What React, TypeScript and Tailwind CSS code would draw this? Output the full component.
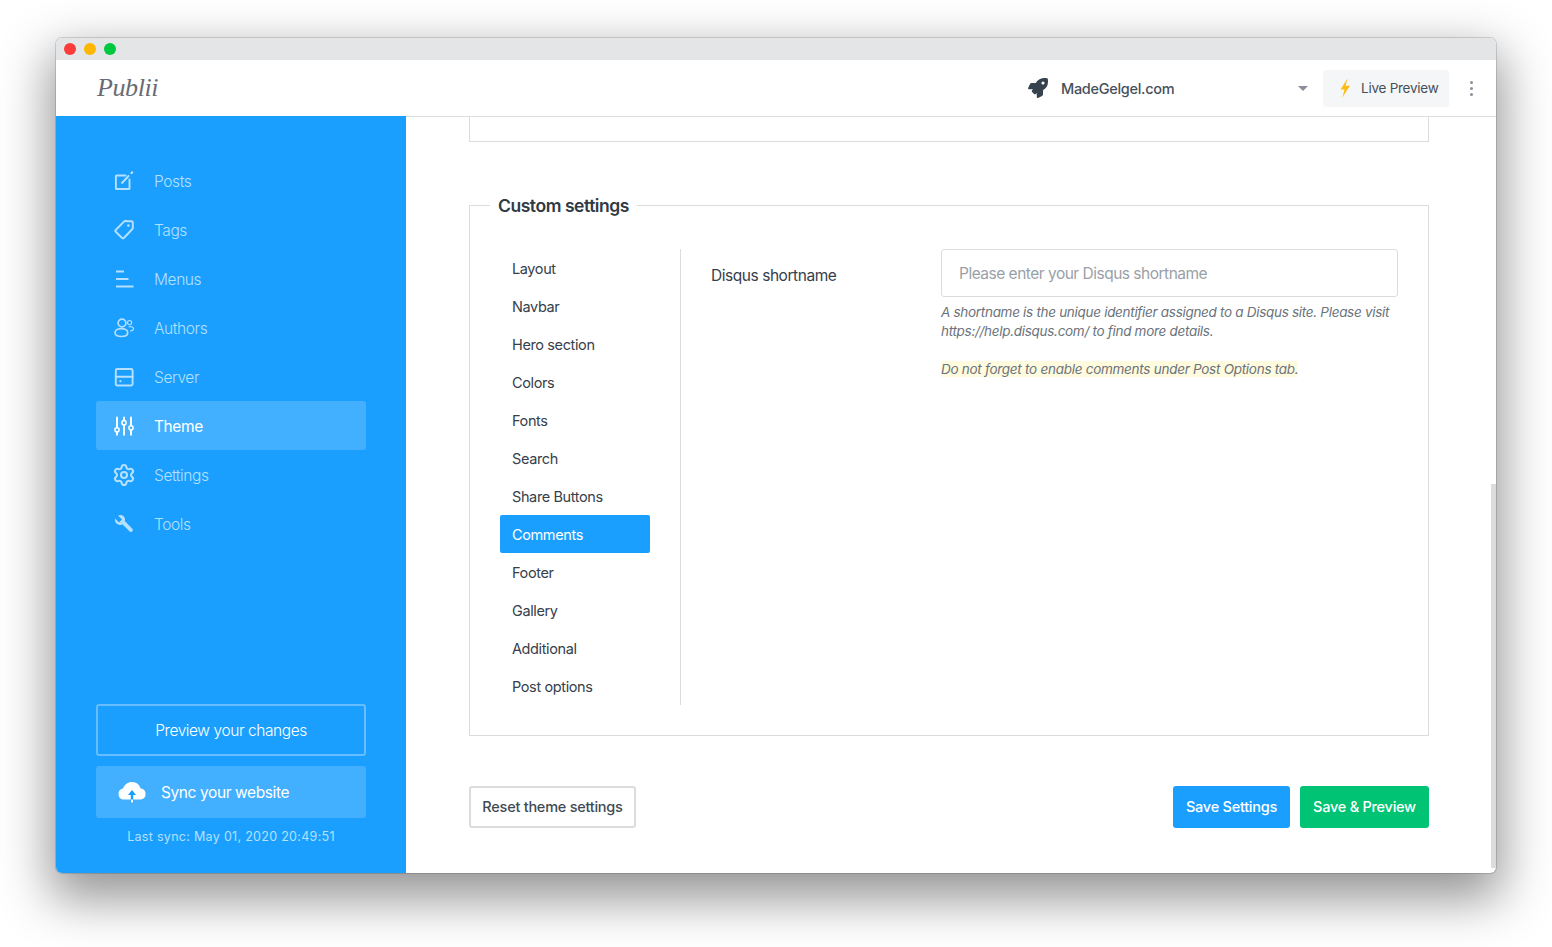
import React from "react";
import { FaRocket } from "react-icons/fa";
import { Settings } from "lucide-react";

const S = { fill: "none", stroke: "currentColor", strokeWidth: 1.9, strokeLinecap: "round", strokeLinejoin: "round" } as const;

const IconPosts = () => (
  <svg width="20" height="20" viewBox="0 0 20 20" {...S}>
    <path d="M11.500 4.500H2.500a.6.6 0 0 0-.6.6v12.300c0 .3.3.6.6.6h12.400c.3 0 .6-.3.6-.6V8.500" />
    <path d="M8 12l6.500-7" />
    <path d="M17.500 2l.6-.6" strokeWidth={2.2} />
  </svg>
);
const IconTag = () => (
  <svg width="20" height="20" viewBox="0 0 20 20" {...S}>
    <path d="M12 1.200h5.600c.7 0 1.200.5 1.200 1.200V8c0 .4-.1.7-.4 1l-8.600 9c-.5.5-1.200.5-1.700 0l-6.400-6.300c-.5-.5-.5-1.200 0-1.700l9.300-9.400c.3-.2.6-.4 1-.4z" />
    <circle cx="14.400" cy="5.600" r="1.300" fill="currentColor" stroke="none" />
  </svg>
);
const IconMenu = () => (
  <svg width="20" height="20" viewBox="0 0 20 20" fill="none" stroke="currentColor" strokeWidth="1.900">
    <path d="M2 2.500h8M2 10h12.500M2 17.500h17.500" />
  </svg>
);
const IconAuthors = () => (
  <svg width="20" height="20" viewBox="0 0 20 20" {...S} strokeWidth={1.700}>
    <circle cx="8" cy="5" r="3.900" />
    <path d="M1 14.700c0-2.400 2.800-4.100 6.400-4.100s6.300 1.700 6.300 4.100c0 2.300-2.600 3.800-6.400 3.800S1 17 1 14.700z" />
    <circle cx="15.600" cy="4.600" r="2.100" strokeWidth={1.100} />
    <path d="M15 8.800c2.400-.6 4.600.3 4.600 2 0 1.300-1.200 2-3 2.100" strokeWidth={1.100} />
  </svg>
);
const IconServer = () => (
  <svg width="20" height="20" viewBox="0 0 20 20" {...S}>
    <rect x="1.800" y="2" width="16.800" height="16.500" rx="1.500" />
    <path d="M1.800 9.800h16.800" />
    <circle cx="6.400" cy="14.200" r="1.100" fill="currentColor" stroke="none" />
  </svg>
);
const IconSliders = () => (
  <svg width="20" height="20" viewBox="0 0 20 20" {...S}>
    <path d="M3 1.500v10M3 16v2.800M10 1.500v3M10 9v9.800M17 1.500v8M17 14v4.800" />
    <circle cx="3" cy="13.800" r="2.100" strokeWidth={1.500} />
    <circle cx="10" cy="6.700" r="2.100" strokeWidth={1.500} />
    <circle cx="17" cy="11.800" r="2.100" strokeWidth={1.500} />
  </svg>
);
const IconWrench = () => (
  <svg width="20" height="20" viewBox="0 0 20 20">
    <path
      fill="currentColor"
      d="M1 4.500l4 4 3-3-4-4c3-1.500 6.500 0 7 3.500.1.800 0 1.500-.2 2l7.500 7.800c1 1 .6 2.100-.2 2.800-.8.600-1.700.5-2.400-.2L8.600 10.500c-2.800 1-5.500.4-7-2-.7-1.200-.9-2.500-.6-4z"
    />
  </svg>
);

type Item = { label: string; icon: React.ReactNode; active?: boolean };
const nav: Item[] = [
  { label: "Posts", icon: <IconPosts /> },
  { label: "Tags", icon: <IconTag /> },
  { label: "Menus", icon: <IconMenu /> },
  { label: "Authors", icon: <IconAuthors /> },
  { label: "Server", icon: <IconServer /> },
  { label: "Theme", icon: <IconSliders />, active: true },
  { label: "Settings", icon: <Settings size={24} strokeWidth={2.1} className="shrink-0" /> },
  { label: "Tools", icon: <IconWrench /> },
];

const tabs = ["Layout", "Navbar", "Hero section", "Colors", "Fonts", "Search", "Share Buttons", "Comments", "Footer", "Gallery", "Additional", "Post options"];

export default function App() {
  return (
    <div className="h-[947px] w-[1552px] overflow-hidden bg-white pl-[56px] pt-[38px] font-['Inter','Liberation_Sans',sans-serif] text-[#2f3a44]">
      <div className="relative flex h-[835px] w-[1440px] flex-col overflow-hidden rounded-[6px] bg-white shadow-[0_0_0_1px_rgba(0,0,0,0.14),0_20px_50px_6px_rgba(0,0,0,0.42)]">
        <div className="flex h-[22px] shrink-0 items-center gap-[8px] bg-[#e4e5e7] pl-[8px]">
          <span className="h-[12px] w-[12px] rounded-full bg-[#fc3b3b]" />
          <span className="h-[12px] w-[12px] rounded-full bg-[#fdb700]" />
          <span className="h-[12px] w-[12px] rounded-full bg-[#00c93f]" />
        </div>

        <header className="flex h-[56px] shrink-0 items-center bg-white pr-[23px]">
          <span className="ml-[41px] font-['Liberation_Serif',serif] text-[26px] italic leading-none tracking-[-0.4px] text-[#686c72]">Publii</span>
          <div className="ml-auto flex w-[282px] items-center">
            <FaRocket className="text-[20px] text-[#36434e]" />
            <span className="ml-[13px] pt-[1px] text-[14.500px] font-medium tracking-[-0.3px] text-[#46505a]">MadeGelgel.com</span>
            <span className="ml-auto mr-[2px] h-0 w-0 border-x-[5px] border-t-[5px] border-x-transparent border-t-[#8b8e99]" />
          </div>
          <button className="ml-[13px] flex h-[37px] w-[126px] items-center rounded-[3px] bg-[#f5f6f8] pl-[15px] text-[13.500px] tracking-[-0.25px] text-[#46505a]">
            <svg width="14" height="20" viewBox="0 0 14 20" className="mr-[9px]"><path d="M9.500 0.500L2.500 11.500h4L4.300 19.500 12 7.800H7.600z" fill="#fdbd12" /></svg>
            <span className="pt-[1px]">Live Preview</span>
          </button>
          <div className="ml-[21px] flex flex-col gap-[3px]">
            <span className="h-[3px] w-[3px] rounded-full bg-[#8b919c]" />
            <span className="h-[3px] w-[3px] rounded-full bg-[#8b919c]" />
            <span className="h-[3px] w-[3px] rounded-full bg-[#8b919c]" />
          </div>
        </header>

        <div className="flex min-h-0 flex-1">
          <aside className="flex w-[350px] shrink-0 flex-col bg-[#1a9fff] px-[40px] pb-[28px] pt-[40px]">
            <nav className="flex flex-col">
              {nav.map((n) => (
                <a
                  key={n.label}
                  className={
                    n.active
                      ? "flex h-[49px] items-center rounded-[3px] bg-[#43b0ff] pl-[18px] text-[15.500px] tracking-[-0.4px] text-white"
                      : "flex h-[49px] items-center pl-[18px] text-[15.500px] font-light tracking-[-0.4px] text-[#b5e0ff]"
                  }
                >
                  <span className="flex w-[40px] items-center"><span className="flex h-[20px] w-[20px] items-center justify-center">{n.icon}</span></span>
                  <span className="pt-[2px]">{n.label}</span>
                </a>
              ))}
            </nav>
            <div className="mt-auto flex flex-col">
              <button className="h-[52px] rounded-[3px] border-2 border-[#66bdff] pt-[2px] text-[15.500px] font-light tracking-[-0.42px] text-white">Preview your changes</button>
              <button className="mt-[10px] flex h-[52px] items-center rounded-[3px] bg-[#43b0ff] pl-[21px] text-[15.500px] tracking-[-0.4px] text-white">
                <svg width="30" height="22" viewBox="0 0 30 22" className="mr-[14px]">
                  <path d="M7 18.500a5.500 5.500 0 0 1-1-10.900C7.300 3.600 11 1 15 1c4.200 0 7.700 2.800 8.600 6.600A5.500 5.500 0 0 1 24 18.500z" fill="#fff" />
                  <path d="M15 9l-4 5h2.800v8h2.400v-8H19z" fill="#1a9fff" />
                  <path d="M14 18.500h2v3h-2z" fill="#fff" />
                </svg>
                <span className="pt-[2px]">Sync your website</span>
              </button>
              <p className="mt-[11px] text-center text-[12.500px] leading-[16px] tracking-[0.3px] text-[#b5e0ff]">Last sync: May 01, 2020 20:49:51</p>
            </div>
          </aside>

          <main className="relative min-w-0 flex-1 border-t border-[#dcdee0] pl-[63px] pr-[67px]">
            <div className="h-[25px] border-x border-b border-[#dcdcdc]" />
            <fieldset className="mt-[51px] h-[543px] border border-[#dcdcdc] pb-[30px] pl-[30px] pr-[30px]">
              <legend className="ml-[-10px] h-[24px] px-[8px] pt-[2px] text-[17.500px] font-semibold leading-[22px] tracking-[-0.45px] text-[#2f3a44]">Custom settings</legend>
              <div className="mt-[32px] flex">
                <ul className="w-[181px] border-r border-[#dcdcdc] pr-[30px]">
                  {tabs.map((t) => (
                    <li
                      key={t}
                      className={
                        t === "Comments"
                          ? "flex h-[38px] items-center rounded-[2px] bg-[#1a9fff] pl-[12px] pt-[2px] text-[14.500px] tracking-[-0.38px] text-white"
                          : "flex h-[38px] items-center pl-[12px] pt-[2px] text-[14.500px] tracking-[-0.38px] text-[#36404a]"
                      }
                    >
                      {t}
                    </li>
                  ))}
                </ul>
                <div className="flex flex-1">
                  <label className="ml-[30px] w-[230px] pt-[15px] text-[15.500px] leading-[24px] tracking-[-0.45px] text-[#36404a]">Disqus shortname</label>
                  <div className="flex-1">
                    <input
                      readOnly
                      placeholder="Please enter your Disqus shortname"
                      className="h-[48px] w-full rounded-[3px] border border-[#dcdcdc] px-[17px] text-[15.500px] tracking-[-0.5px] placeholder:text-[#9a9fa7]"
                    />
                    <p className="mt-[6px] text-[13.500px] italic leading-[19px] tracking-[-0.3px] text-[#6b737b]">
                      A shortname is the unique identifier assigned to a Disqus site. Please visit https://help.disqus.com/ to find more details.
                    </p>
                    <p className="mt-[19px] text-[13.500px] italic leading-[19px] tracking-[-0.27px] text-[#6b737b]">
                      <span className="bg-[#fffbdf]">Do not forget to enable comments under Post Options tab.</span>
                    </p>
                  </div>
                </div>
              </div>
            </fieldset>
            <div className="mt-[50px] flex items-center">
              <button className="h-[42px] w-[167px] rounded-[3px] border-2 border-[#dcdcdc] text-[14.500px] font-medium tracking-[-0.25px] text-[#3f4a54]">Reset theme settings</button>
              <button className="ml-auto h-[42px] w-[117px] rounded-[3px] bg-[#1a9fff] text-[14.500px] font-medium tracking-[-0.25px] text-white">Save Settings</button>
              <button className="ml-[10px] h-[42px] w-[129px] rounded-[3px] bg-[#00c373] text-[14.500px] font-medium tracking-[-0.25px] text-white">Save &amp; Preview</button>
            </div>
            <div className="absolute bottom-[5px] right-0 h-[384px] w-[5px] bg-[#dcdcdc]" />
          </main>
        </div>
      </div>
    </div>
  );
}
